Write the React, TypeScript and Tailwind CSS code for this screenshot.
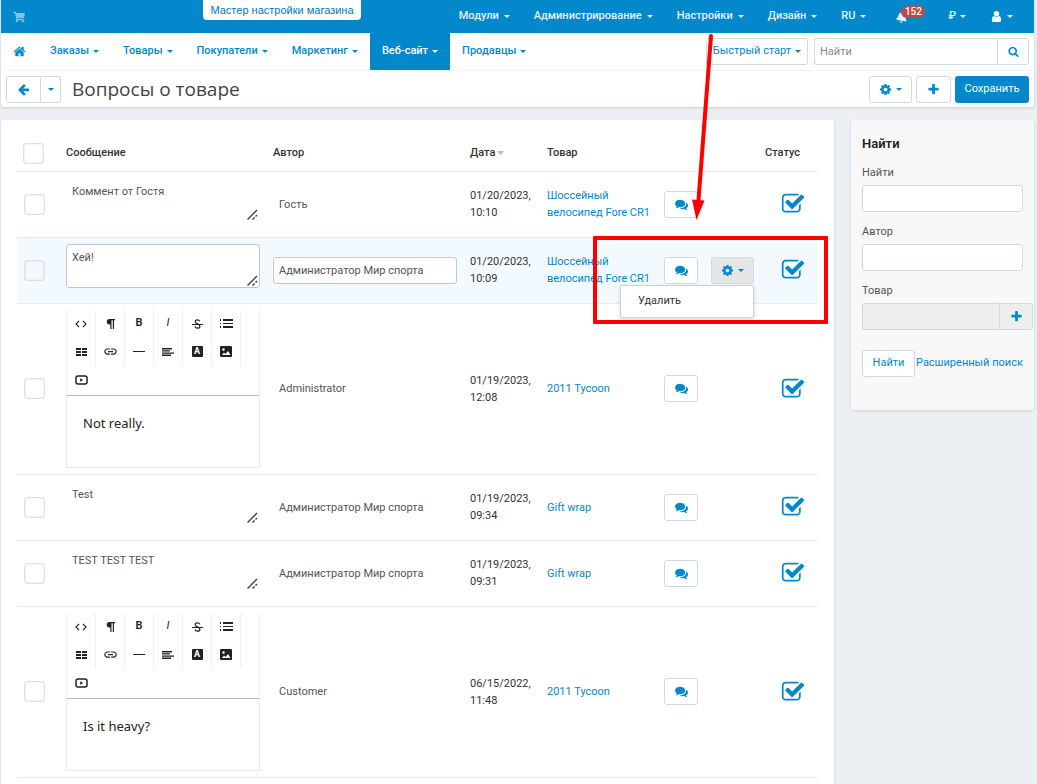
import type { ReactNode } from "react";
import { FaBell, FaShoppingCart } from "react-icons/fa";
import { MdCode, MdInsertLink } from "react-icons/md";

type Post = {
	id: number;
	message: string;
	author: string;
	date: string;
	time: string;
	product: string;
	kind: "text" | "editor";
	active?: boolean;
};

const posts: Post[] = [
	{ id: 1, message: "Коммент от Гостя", author: "Гость", date: "01/20/2023,", time: "10:10", product: "Шоссейный велосипед Fore CR1", kind: "text" },
	{ id: 2, message: "Хей!", author: "Администратор Мир спорта", date: "01/20/2023,", time: "10:09", product: "Шоссейный велосипед Fore CR1", kind: "text", active: true },
	{ id: 3, message: "Not really.", author: "Administrator", date: "01/19/2023,", time: "12:08", product: "2011 Tycoon", kind: "editor" },
	{ id: 4, message: "Test", author: "Администратор Мир спорта", date: "01/19/2023,", time: "09:34", product: "Gift wrap", kind: "text" },
	{ id: 5, message: "TEST TEST TEST", author: "Администратор Мир спорта", date: "01/19/2023,", time: "09:31", product: "Gift wrap", kind: "text" },
	{ id: 6, message: "Is it heavy?", author: "Customer", date: "06/15/2022,", time: "11:48", product: "2011 Tycoon", kind: "editor" },
];

const sections = ["Заказы", "Товары", "Покупатели", "Маркетинг", "Веб-сайт", "Продавцы"];
const systemMenu = ["Модули", "Администрирование", "Настройки", "Дизайн", "RU"];

const icons = {
	comments:
		"M1408 768q0 139-94 257t-256.5 186.5-353.5 68.5q-86 0-176-16-124 88-278 128-36 9-86 16h-3q-11 0-20.5-8t-11.5-21q-1-3-1-6.5t.5-6.5 2-6l2.5-5 3.5-5.5 4-5 4.5-5 4-4.5q5-6 23-25t26-29.5 22.5-29 25-38.5 20.5-44q-124-72-195-177t-71-224q0-139 94-257t256.5-186.5 353.5-68.5 353.5 68.5 256.5 186.5 94 257zm384 256q0 120-71 224.5t-195 176.5q10 24 20.5 44t25 38.5 22.5 29 26 29.5 23 25q1 1 4 4.5t4.5 5 4 5 3.5 5.5l2.5 5 2 6 .5 6.5-1 6.5q-3 14-13 22t-22 7q-50-7-86-16-154-40-278-128-90 16-176 16-271 0-472-132 58 4 88 4 161 0 309-45t264-129q125-92 192-212t67-254q0-77-23-152 129 71 204 178t75 230z",
	check:
		"M1472 930v318q0 119-84.5 203.5t-203.5 84.5h-832q-119 0-203.5-84.5t-84.5-203.5v-832q0-119 84.5-203.5t203.5-84.5h832q63 0 117 25 15 7 18 23 3 17-9 29l-49 49q-10 10-23 10-3 0-9-2-23-6-45-6h-832q-66 0-113 47t-47 113v832q0 66 47 113t113 47h832q66 0 113-47t47-113v-254q0-13 9-22l64-64q10-10 23-10 6 0 12 3 20 8 20 29zm231-489l-814 814q-24 24-57 24t-57-24l-430-430q-24-24-24-57t24-57l110-110q24-24 57-24t57 24l263 263 647-647q24-24 57-24t57 24l110 110q24 24 24 57t-24 57z",
	cog: "M1152 896q0-106-75-181t-181-75-181 75-75 181 75 181 181 75 181-75 75-181zm512-109v222q0 12-8 23t-20 13l-185 28q-19 54-39 91 35 50 107 138 10 12 10 25t-9 23q-27 37-99 108t-94 71q-12 0-26-9l-138-108q-44 23-91 38-16 136-29 186-7 28-36 28h-222q-14 0-24.5-8.5t-11.5-21.5l-28-184q-49-16-90-37l-141 107q-10 9-25 9-14 0-25-11-126-114-165-168-7-10-7-23 0-12 8-23 15-21 51-66.5t54-70.5q-27-50-41-99l-183-27q-13-2-21-12.5t-8-23.5v-222q0-12 8-23t19-13l186-28q14-46 39-92-40-57-107-138-10-12-10-24 0-10 9-23 26-36 98.5-107.5t94.5-71.5q13 0 26 10l138 107q44-23 91-38 16-136 29-186 7-28 36-28h222q14 0 24.5 8.5t11.5 21.5l28 184q49 16 90 37l142-107q9-9 24-9 13 0 25 10 129 119 165 170 7 8 7 22 0 12-8 23-15 21-51 66.5t-54 70.5q26 50 41 98l183 28q13 2 21 12.5t8 23.5z",
	plus: "M1600 736v192q0 40-28 68t-68 28h-416v416q0 40-28 68t-68 28h-192q-40 0-68-28t-28-68v-416h-416q-40 0-68-28t-28-68v-192q0-40 28-68t68-28h416v-416q0-40 28-68t68-28h192q40 0 68 28t28 68v416h416q40 0 68 28t28 68z",
	back: "M1664 896v128q0 53-32.5 90.5t-84.5 37.5h-704l293 294q38 36 38 90t-38 90l-75 76q-37 37-90 37-52 0-91-37l-651-652q-37-37-37-90 0-52 37-91l651-650q38-38 91-38 52 0 90 38l75 74q38 38 38 91t-38 91l-293 293h704q52 0 84.5 37.5t32.5 90.5z",
	search:
		"M1216 832q0-185-131.5-316.5t-316.5-131.5-316.5 131.5-131.5 316.5 131.5 316.5 316.5 131.5 316.5-131.5 131.5-316.5zm512 832q0 52-38 90t-90 38q-54 0-90-38l-343-342q-179 124-399 124-143 0-273.5-55.5t-225-150-150-225-55.5-273.5 55.5-273.5 150-225 225-150 273.5-55.5 273.5 55.5 225 150 150 225 55.5 273.5q0 220-124 399l343 343q37 37 37 90z",
	home: "M1472 992v480q0 26-19 45t-45 19h-384v-384h-256v384h-384q-26 0-45-19t-19-45v-480q0-1 .5-3t.5-3l575-474 575 474q1 2 1 6zm223-69l-62 74q-8 9-21 11h-3q-13 0-21-7l-692-577-692 577q-12 8-24 7-13-2-21-11l-62-74q-8-10-7-23.5t11-21.5l719-599q32-26 76-26t76 26l244 204v-195q0-14 9-23t23-9h192q14 0 23 9t9 23v408l219 182q10 8 11 21.5t-7 23.5z",
	user: "M1536 1399q0 109-62.5 187t-150.5 78h-854q-88 0-150.5-78t-62.5-187q0-85 8.5-160.5t31.5-152 58.5-131 94-89 134.5-34.5q131 128 313 128t313-128q76 0 134.5 34.5t94 89 58.5 131 31.5 152 8.5 160.5zm-256-887q0 159-112.5 271.5t-271.5 112.5-271.5-112.5-112.5-271.5 112.5-271.5 271.5-112.5 271.5 112.5 112.5 271.5z",
};

const Icon = ({ name, size = 13 }: { name: keyof typeof icons; size?: number }) => (
	<svg width={size} height={size} viewBox="0 0 1792 1792" fill="currentColor" className="shrink-0">
		<path d={icons[name]} />
	</svg>
);

const Caret = () => (
	<svg className="w-[6px] h-[3px] shrink-0" viewBox="0 0 6 3" fill="currentColor">
		<path d="M0 0h6L3 3z" />
	</svg>
);

const ParagraphIcon = () => (
	<svg className="w-[9px] h-[10px]" viewBox="0 0 9 10" fill="currentColor">
		<path d="M3.5 0H9v1.3H8V10H6.800V1.300H5.500V10H4.300V5.500h-.8a2.750 2.750 0 0 1 0-5.500z" />
	</svg>
);

const StrikeIcon = () => (
	<svg className="w-[11px] h-[10px]" viewBox="0 0 11 10" fill="none" stroke="currentColor" strokeWidth="1.2">
		<path d="M7.800 2.200C7.300 1.200 6.500.8 5.500.8 4.200.8 3.200 1.500 3.200 2.700c0 2.500 4.700 1.800 4.700 4.500 0 1.300-1 2-2.400 2S3.200 8.600 2.900 7.500" />
		<path d="M0 5.500h11" strokeWidth="1" />
	</svg>
);

const ListIcon = () => (
	<svg className="w-[13px] h-[9px]" viewBox="0 0 13 9" fill="currentColor">
		<path d="M0 0h1v2H0zM3 0h10v2H3zM0 4h1v1H0zM3 4h10v1H3zM0 7h1v2H0zM3 7h10v2H3z" />
	</svg>
);

const TableIcon = () => (
	<svg className="w-[11px] h-2" viewBox="0 0 11 8" fill="currentColor">
		<path d="M0 0h5v2H0zM6 0h5v2H6zM0 3h5v2H0zM6 3h5v2H6zM0 6h5v2H0zM6 6h5v2H6z" />
	</svg>
);

const LineIcon = () => (
	<svg className="w-3 h-px" viewBox="0 0 12 1" fill="currentColor">
		<path d="M0 0h12v1H0z" />
	</svg>
);

const AlignIcon = () => (
	<svg className="w-3 h-2" viewBox="0 0 12 8" fill="currentColor">
		<path d="M0 0h10v1.400H0zM0 2.200h8v1.400H0zM0 4.400h12v1.400H0zM0 6.600h9V8H0z" />
	</svg>
);

const ImageIcon = () => (
	<svg className="w-[12px] h-[11px]" viewBox="0 0 12 11">
		<rect width="12" height="11" rx="1" fill="currentColor" />
		<circle cx="3.5" cy="3.5" r="1.2" fill="#fff" />
		<path d="M2 9l2-2.5L5.5 8 8 5l2.5 4z" fill="#fff" />
	</svg>
);

const VideoIcon = () => (
	<svg className="w-[13px] h-[10px]" viewBox="0 0 13 10">
		<rect x="1" y="1" width="11" height="8" rx="2" fill="none" stroke="currentColor" strokeWidth="1.5" />
		<path d="M5.2 3.2v3.600l3-1.800z" fill="currentColor" />
	</svg>
);

const Button = ({
	children,
	label,
	className,
}: {
	children: ReactNode;
	label?: string;
	className: string;
}) => (
	<button
		type="button"
		aria-label={label}
		className={`h-[27px] flex items-center justify-center gap-1 border border-[#d0dae3] rounded-[3px] text-[#0388cc] shrink-0 ${className}`}
	>
		{children}
	</button>
);

const Checkbox = ({ label }: { label: string }) => (
	<input
		type="checkbox"
		aria-label={label}
		className="block appearance-none w-[21px] h-[21px] border border-[#e0e0e0] rounded-[3px] shadow-[inset_0_0_3px_rgba(0,0,0,0.1)]"
	/>
);

const tools: [string, ReactNode][] = [
	["HTML", <MdCode size={14} />],
	["Format", <ParagraphIcon />],
	["Bold", <span className="text-[11px] font-semibold">B</span>],
	["Italic", <span className="text-[11px] italic">I</span>],
	["Deleted", <StrikeIcon />],
	["Lists", <ListIcon />],
	["Table", <TableIcon />],
	["Link", <MdInsertLink size={15} />],
	["Line", <LineIcon />],
	["Align", <AlignIcon />],
	["Color", <span className="w-[11px] h-[11px] bg-[#222] text-white text-[9px] leading-[11px] font-bold rounded-[1px]">A</span>],
	["Image", <ImageIcon />],
	["Video", <VideoIcon />],
];

const Editor = ({ text }: { text: string }) => (
	<div className="w-[194px]">
		<div className="flex flex-wrap border-x border-b border-x-[#f0f0f0] border-b-[#b8bbbb] h-[86px] text-[#222]">
			{tools.map(([name, icon]) => (
				<button
					key={name}
					type="button"
					aria-label={name}
					className="w-[29px] h-7 flex items-center justify-center border-r border-[#f0f0f0] last:border-r-0"
				>
					{icon}
				</button>
			))}
		</div>
		<div className="h-[72px] px-4 pt-4 border-x border-b border-[#e8e8e8] font-['Noto_Sans',sans-serif] text-[13px] leading-[22px] text-[#222]">
			{text}
		</div>
	</div>
);

const Message = ({ text, active }: { text: string; active?: boolean }) => (
	<div className="relative w-[194px] h-[44px]">
		<textarea
			aria-label="Сообщение"
			defaultValue={text}
			className={`block w-full h-full resize-none px-[5px] pt-1 leading-[18px] border rounded-[3px] text-[#555] ${active ? "border-[#c4c8ca] bg-white" : "border-transparent"}`}
		/>
		<svg className="absolute right-[2px] bottom-[2px] w-[11px] h-[11px]" viewBox="0 0 11 11" stroke="#444" strokeWidth="1.5">
			<path d="M.5 10.5l9.5-9.5M5.5 10.5l2-2M8.5 7.5l1.5-1.5" />
		</svg>
	</div>
);

const Row = ({ post }: { post: Post }) => (
	<tr
		className={`border-b border-[#e8eaec] ${post.kind === "editor" ? "h-[171px]" : "h-[66px]"} ${post.active ? "bg-[#f3faff]" : ""}`}
	>
		<td className="pl-[7px]">
			<Checkbox label={post.message} />
		</td>
		<td className={post.kind === "editor" ? "" : "align-top pt-[6px]"}>
			{post.kind === "editor" ? (
				<Editor text={post.message} />
			) : (
				<Message text={post.message} active={post.active} />
			)}
		</td>
		<td>
			<input
				type="text"
				aria-label="Автор"
				defaultValue={post.author}
				className={`block w-[184px] h-[27px] px-[5px] border rounded-[3px] text-[#555] ${post.active ? "border-[#c4c8ca] bg-white" : "border-transparent"}`}
			/>
		</td>
		<td className="leading-[17px]">
			{post.date}
			<br />
			{post.time}
		</td>
		<td className="leading-[17px] pr-3">
			<a href="#product" className="text-[#0388cc]">
				{post.product}
			</a>
		</td>
		<td>
			<div className="relative flex gap-[13px]">
				<Button label="Ответы" className="w-[34px] bg-white">
					<Icon name="comments" />
				</Button>
				{post.active && (
					<>
						<Button label="Действия" className="w-[43px] bg-[#e6e6e6]">
							<Icon name="cog" />
							<Caret />
						</Button>
						<div className="absolute top-7 -left-11 w-[134px] h-[33px] px-[17px] flex items-center bg-white border border-[#d0d0d0] rounded-[2px] shadow-[0_2px_4px_rgba(0,0,0,0.15)]">
							<a href="#delete">Удалить</a>
						</div>
					</>
				)}
			</div>
		</td>
		<td className="pr-[13px] text-[#0388cc]">
			<div className="flex justify-end">
				<Icon name="check" size={24} />
			</div>
		</td>
	</tr>
);

const Header = () => (
	<header className="bg-white rounded-b-[3px] shadow-[0_1px_3px_rgba(0,0,0,0.15)]">
		<div className="flex justify-between h-[33px] pl-3 pr-[21px] bg-[#0388cc] text-[#e4f3fb] font-medium">
			<div className="flex">
				<a href="#store" aria-label="Магазин" className="flex items-center text-[#7cc1e6]">
					<FaShoppingCart size={12} />
				</a>
				<a
					href="#wizard"
					className="ml-[178px] h-5 w-[158px] text-center leading-5 bg-white rounded-b-[4px] text-[#0378c0] text-[11px] font-normal font-['Liberation_Sans',sans-serif] whitespace-nowrap"
				>
					Мастер настройки магазина
				</a>
			</div>
			<nav className="flex gap-6">
				{systemMenu.map(item => (
					<button key={item} type="button" className="flex items-center gap-[5px]">
						{item}
						<Caret />
					</button>
				))}
				<button type="button" aria-label="Уведомления" className="relative flex items-center gap-1 ml-[6px] w-[28px]">
					<FaBell size={12} className="rotate-12" />
					<span className="absolute left-[5px] top-[6px] w-6 h-3 rounded-full bg-[#c04848] text-white text-[10px] leading-3">
						152
					</span>
				</button>
				<button type="button" className="flex items-center gap-1">
					₽
					<Caret />
				</button>
				<button type="button" aria-label="Профиль" className="flex items-center gap-1 text-white">
					<Icon name="user" />
					<Caret />
				</button>
			</nav>
		</div>

		<div className="flex justify-between h-[38px] border-b border-[#f4f4f4]">
			<nav className="flex text-[#0388cc] font-medium">
				<a href="#home" aria-label="Главная" className="flex items-center px-3">
					<Icon name="home" />
				</a>
				{sections.map(item => (
					<a
						key={item}
						href={`#${item}`}
						className={`flex items-center gap-1 px-3 h-[37px] ${item === "Веб-сайт" ? "bg-[#0388cc] text-white" : ""}`}
					>
						{item}
						<Caret />
					</a>
				))}
			</nav>
			<div className="flex items-center gap-[6px] pr-[5px]">
				<Button className="w-[102px] bg-white whitespace-nowrap">
					Быстрый старт
					<Caret />
				</Button>
				<form className="flex w-[215px]">
					<input
						type="text"
						aria-label="Найти"
						placeholder="Найти"
						className="min-w-0 flex-1 h-[27px] px-[5px] border border-r-0 border-[#d0dae3] rounded-l-[3px] placeholder:text-[#888]"
					/>
					<Button label="Поиск" className="w-8 rounded-l-none">
						<Icon name="search" size={11} />
					</Button>
				</form>
			</div>
		</div>

		<div className="flex items-center h-9 pl-[5px] pr-[5px]">
			<Button label="Назад" className="w-[35px] rounded-r-none">
				<Icon name="back" />
			</Button>
			<Button label="Назад к" className="w-[20px] rounded-l-none border-l-0">
				<Caret />
			</Button>
			<h1 className="flex-1 ml-[11px] font-['Open_Sans',sans-serif] text-[19px] text-[#444]">Вопросы о товаре</h1>
			<div className="flex gap-1">
				<Button label="Инструменты" className="w-[43px]">
					<Icon name="cog" />
					<Caret />
				</Button>
				<Button label="Добавить" className="w-[35px]">
					<Icon name="plus" />
				</Button>
				<button type="submit" className="w-[74px] h-[27px] rounded-[3px] bg-[#0388cc] text-white">
					Сохранить
				</button>
			</div>
		</div>
	</header>
);

const Sidebar = () => (
	<aside className="w-[183px] h-[290px] shrink-0 pt-[15px] pl-[11px] bg-[#f8f8f8] rounded-[3px] shadow-[0_1px_3px_rgba(0,0,0,0.12)] text-[#555]">
		<h2 className="text-[13px] leading-[18px] font-semibold text-[#222]">Найти</h2>
		<form>
			<label htmlFor="query" className="block mt-[11px] mb-[3px] leading-[18px]">
				Найти
			</label>
			<input id="query" className="block w-[161px] h-[27px] px-[5px] bg-white border border-[#d0dae3] rounded-[3px]" />
			<label htmlFor="author" className="block mt-[11px] mb-[3px] leading-[18px]">
				Автор
			</label>
			<input id="author" className="block w-[161px] h-[27px] px-[5px] bg-white border border-[#d0dae3] rounded-[3px]" />
			<label htmlFor="product" className="block mt-[11px] mb-[3px] leading-[18px]">
				Товар
			</label>
			<div className="flex">
				<input id="product" readOnly className="w-[137px] h-[27px] px-[5px] bg-[#eee] border border-r-0 border-[#d0dae3] rounded-l-[3px]" />
				<Button label="Выбрать товар" className="w-[34px] rounded-l-none bg-[#eee]">
					<Icon name="plus" />
				</Button>
			</div>
			<div className="flex items-center mt-5 whitespace-nowrap">
				<Button className="w-[53px] bg-white">Найти</Button>
				<a href="#advanced" className="text-[#0388cc] ml-px">
					Расширенный поиск
				</a>
			</div>
		</form>
	</aside>
);

export default function App() {
	return (
		<div className="relative min-h-screen pl-px pr-[3px] bg-[#ecf0f4] font-[Roboto,sans-serif] text-[11px] text-[#333]">
			<Header />
			<main className="flex items-start gap-[17px] mt-[13px]">
				<section className="flex-1 min-w-0 p-4 bg-white rounded-[3px] shadow-[0_1px_3px_rgba(0,0,0,0.12)]">
					<table className="w-full table-fixed border-collapse text-left">
						<thead>
							<tr className="h-[35px] border-b border-[#e8eaec]">
								<th className="w-[49px] pl-[6px]">
									<Checkbox label="Выбрать все" />
								</th>
								<th className="w-[207px] font-medium">Сообщение</th>
								<th className="w-[197px] font-medium">Автор</th>
								<th className="w-[77px] font-medium">
									<span className="flex items-center gap-[2px]">
										Дата
										<svg className="w-[7px] h-1" viewBox="0 0 7 4" fill="#bbb">
											<path d="M0 0h7L3.5 4z" />
										</svg>
									</span>
								</th>
								<th className="w-[117px] font-medium">Товар</th>
								<th />
								<th className="w-[60px] pr-[18px] text-right font-medium">Статус</th>
							</tr>
						</thead>
						<tbody>
							{posts.map(post => (
								<Row key={post.id} post={post} />
							))}
						</tbody>
					</table>
				</section>
				<Sidebar />
			</main>

			<div className="absolute left-[593px] top-[236px] w-[235px] h-[88px] border-4 border-[#ff0000] rounded-[1px] pointer-events-none" />
			<svg className="absolute left-[688px] top-[32px] w-[30px] h-[190px] pointer-events-none" viewBox="0 0 30 190">
				<path d="M23 4L10.5 168" stroke="#ff0000" strokeWidth="4" strokeLinecap="round" />
				<path d="M4 167.5l12.5 1L8.500 188z" fill="#ff0000" />
			</svg>
		</div>
	);
}
